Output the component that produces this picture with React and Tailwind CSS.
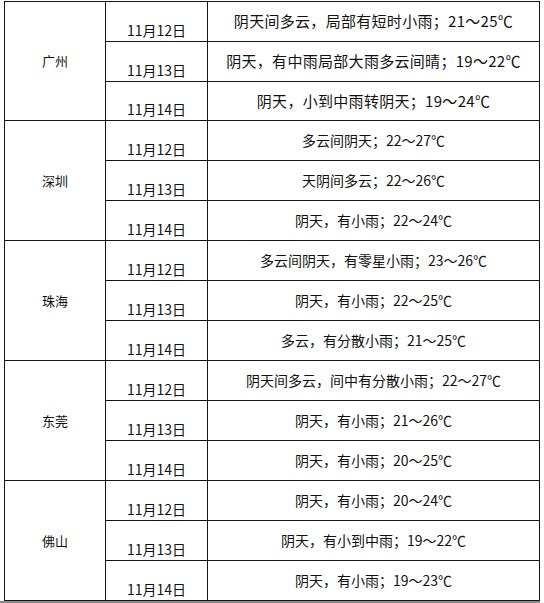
const groups = [
  {
    city: "广州",
    big: true,
    rows: [
      ["11月12日", "阴天间多云，局部有短时小雨；21～25℃"],
      ["11月13日", "阴天，有中雨局部大雨多云间晴；19～22℃"],
      ["11月14日", "阴天，小到中雨转阴天；19～24℃"],
    ],
  },
  {
    city: "深圳",
    rows: [
      ["11月12日", "多云间阴天；22～27℃"],
      ["11月13日", "天阴间多云；22～26℃"],
      ["11月14日", "阴天，有小雨；22～24℃"],
    ],
  },
  {
    city: "珠海",
    rows: [
      ["11月12日", "多云间阴天，有零星小雨；23～26℃"],
      ["11月13日", "阴天，有小雨；22～25℃"],
      ["11月14日", "多云，有分散小雨；21～25℃"],
    ],
  },
  {
    city: "东莞",
    rows: [
      ["11月12日", "阴天间多云，间中有分散小雨；22～27℃"],
      ["11月13日", "阴天，有小雨；21～26℃"],
      ["11月14日", "阴天，有小雨；20～25℃"],
    ],
  },
  {
    city: "佛山",
    rows: [
      ["11月12日", "阴天，有小雨；20～24℃"],
      ["11月13日", "阴天，有小到中雨；19～22℃"],
      ["11月14日", "阴天，有小雨；19～23℃"],
    ],
  },
];

function Group({ group, first }) {
  const lastRow = first ? "h-[38px] " : "h-[39px] ";
  return (
    <div
      className={
        (first ? "h-[119px] " : "h-[120px] ") +
        "flex border-b border-[#151515]"
      }
    >
      {/* city */}
      <div className="flex w-[101px] items-center justify-center border-r border-[#151515] text-[13px]">
        {group.city}
      </div>

      {/* dates */}
      <div className="flex w-[102px] flex-col border-r border-[#151515]">
        {group.rows.map((r, i) => (
          <div
            key={i}
            className={
              (i < 2 ? "h-[40px] border-b border-[#151515] " : lastRow) +
              "flex items-end justify-center pb-[3px] text-[14px] leading-[16px]"
            }
          >
            {r[0]}
          </div>
        ))}
      </div>

      {/* descriptions */}
      <div className="flex w-[332px] flex-col border-r border-[#151515]">
        {group.rows.map((r, i) => (
          <div
            key={i}
            className={
              (i < 2 ? "h-[40px] border-b border-[#151515] " : lastRow) +
              (group.big
                ? "flex items-center justify-center text-[15px] tracking-[0.3px]"
                : "flex items-center justify-center text-[14px]")
            }
          >
            {r[1]}
          </div>
        ))}
      </div>
    </div>
  );
}

export default function App() {
  return (
    <div className="h-[603px] w-[544px] overflow-hidden bg-white font-['Noto_Sans_CJK_SC','Noto_Sans',sans-serif] text-[#111]">
      <div className="ml-[4px] mt-px w-[536px] border-l border-t border-[#151515]">
        {groups.map((g, i) => (
          <Group key={g.city} group={g} first={i === 0} />
        ))}
      </div>
      <div className="h-[2px] w-[540px] bg-[#8a8a8a]" />
    </div>
  );
}
